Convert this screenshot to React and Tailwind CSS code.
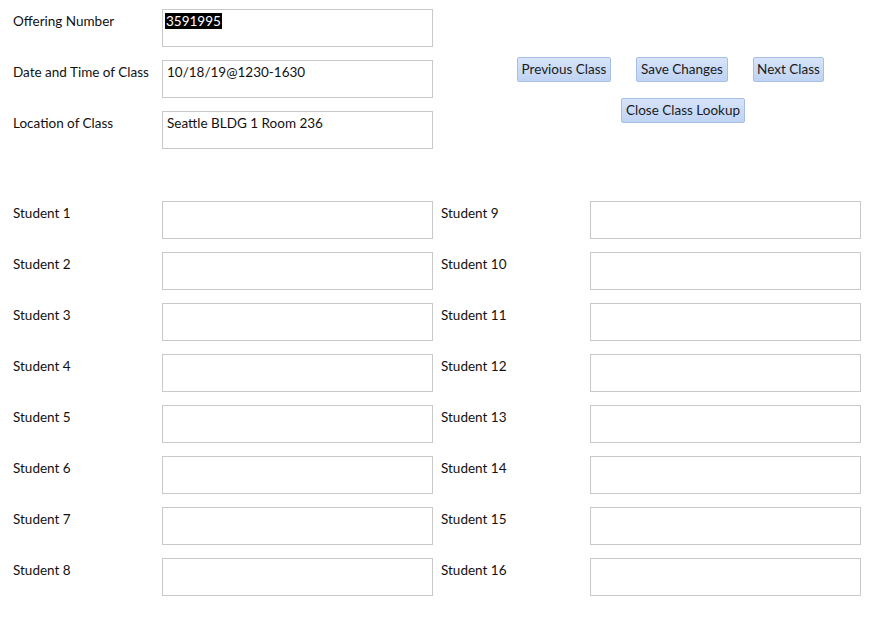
import React from 'react'

const Field = ({ label, value, selected }) => (
    <div className="flex">
        <div className="w-[149px] pt-[2px] text-[13.5px] text-[#111]">{label}</div>
        <div className="w-[271px] h-[38px] border border-[#c9c9c9] bg-white px-[4px] pt-[1px] text-[13.5px] text-[#111]">
            {selected ? (
                <span className="bg-black text-white px-[1px] -ml-[2px]">{value}</span>
            ) : value}
        </div>
    </div>
)

const Btn = ({ children, className = '' }) => (
    <button
        type="button"
        className={"h-[25px] px-0 whitespace-nowrap rounded-[2px] border border-[#a7bfe6] bg-gradient-to-b from-[#d7e4fa] to-[#bfd3f3] text-[13.5px] text-[#1a1a1a] " + className}
    >
        {children}
    </button>
)

const App = () => {
    const left = [1, 2, 3, 4, 5, 6, 7, 8]
    const right = [9, 10, 11, 12, 13, 14, 15, 16]

    return (
        <div className="w-[882px] h-[622px] bg-white pl-[13px] pt-[9px] font-['Lato','Noto_Sans',sans-serif]">
            <section className="flex">
                <div className="flex flex-col gap-[13px]">
                    <Field label="Offering Number" value="3591995" selected />
                    <Field label="Date and Time of Class" value="10/18/19@1230-1630" />
                    <Field label="Location of Class" value="Seattle BLDG 1 Room 236" />
                </div>
                <div className="ml-[84px] pt-[48px] flex flex-col gap-[15px]">
                    <div className="flex gap-[25px]">
                        <Btn className="w-[94px]">Previous Class</Btn>
                        <Btn className="w-[92px]">Save Changes</Btn>
                        <Btn className="w-[71px]">Next Class</Btn>
                    </div>
                    <div className="pl-[104px]">
                        <Btn className="w-[124px]">Close Class Lookup</Btn>
                    </div>
                </div>
            </section>

            <section className="mt-[52px] flex gap-[8px]">
                <div className="flex flex-col gap-[13px]">
                    {left.map(n => <Field key={n} label={`Student ${n}`} />)}
                </div>
                <div className="flex flex-col gap-[13px]">
                    {right.map(n => <Field key={n} label={`Student ${n}`} />)}
                </div>
            </section>
        </div>
    )
}

export default App
